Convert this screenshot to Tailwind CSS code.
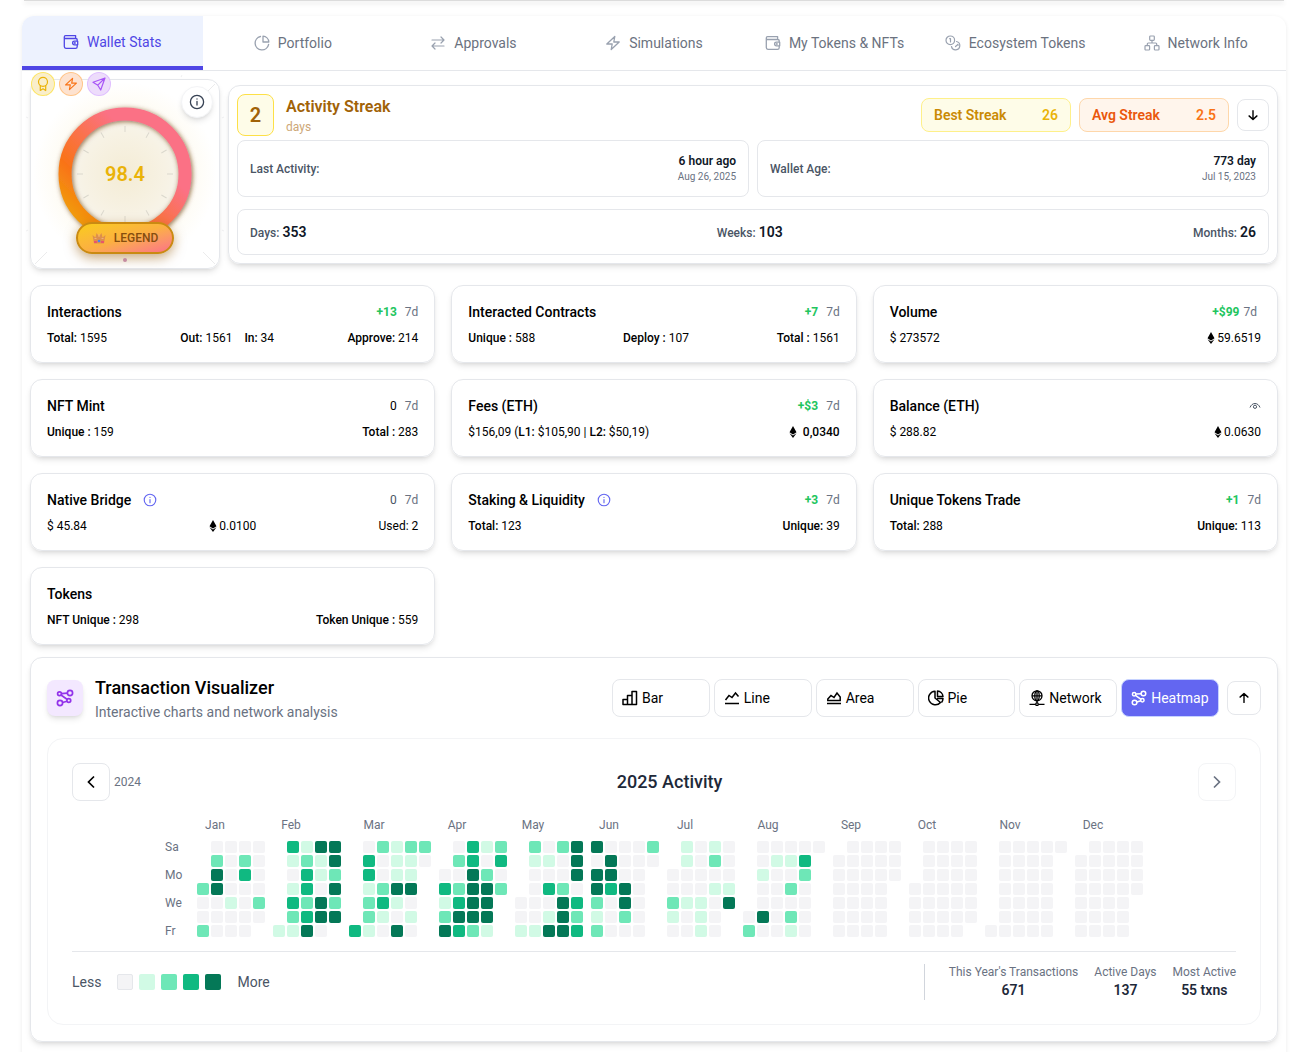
<!DOCTYPE html>
<html lang="en">
<head>
<meta charset="utf-8">
<meta name="viewport" content="width=device-width, initial-scale=1">
<title>Wallet Stats</title>
<script src="https://cdn.jsdelivr.net/npm/@tailwindcss/browser@4"></script>
</head>
<body class="overflow-x-hidden bg-white font-['Roboto',sans-serif] text-black">

<svg class="hidden" aria-hidden="true">
  <symbol id="wallet" viewBox="0 0 16 16" fill="none" stroke="currentColor" stroke-width="1.3" stroke-linejoin="round"><path d="M1.3 3v9.6c0 1 .6 1.7 1.6 1.7h9.600c1 0 1.700-.6 1.700-1.600v-1.900M14.200 7.200V5.800c0-.8-.6-1.300-1.400-1.300H2.500C1.800 4.500 1.300 4 1.300 3.100S1.800 1.600 2.600 1.600h10v2.900M14.700 7.200h-3.200c-1.100 0-1.900.8-1.900 1.800s.8 1.800 1.900 1.800h3.200z"/><circle cx="11.800" cy="9" r=".4"/></symbol>
  <symbol id="pie" viewBox="0 0 16 16" fill="none" stroke="currentColor" stroke-width="1.300" stroke-linejoin="round" stroke-linecap="round"><path d="M6.500 1.500A6.800 6.800 0 1 0 14.600 9.500"/><path d="M9 1.200A6.300 6.300 0 0 1 14.800 7H9z"/></symbol>
  <symbol id="swap" viewBox="0 0 16 16" fill="none" stroke="currentColor" stroke-width="1.200" stroke-linecap="round" stroke-linejoin="round"><path d="M2 5h12M11 2l3 3-3 3M14 11H2M5 8l-3 3 3 3"/></symbol>
  <symbol id="bolt" viewBox="0 0 16 16" fill="none" stroke="currentColor" stroke-width="1.300" stroke-linejoin="round"><path d="M9.800 1.500 1.800 9h5.400l-1 5.500L14.200 7H8.800z"/></symbol>
  <symbol id="coins" viewBox="0 0 16 16" fill="none" stroke="currentColor" stroke-width="1.200" stroke-linecap="round" stroke-linejoin="round"><circle cx="5.300" cy="5.300" r="4.300"/><path d="M4.700 3.700h.8v3.300M11.500 6.500a4.200 4.200 0 1 1-5 5M10.500 11.500l1.500-1.300M12.700 9.500l.5.500"/></symbol>
  <symbol id="sitemap" viewBox="0 0 16 16" fill="none" stroke="currentColor" stroke-width="1.200" stroke-linejoin="round"><rect x="5.700" y="1" width="4.600" height="4.400" rx=".8"/><rect x="1" y="10.600" width="4.600" height="4.400" rx=".8"/><rect x="10.400" y="10.600" width="4.600" height="4.400" rx=".8"/><path d="M8 5.400V8M3.300 10.600V9c0-.6.400-1 1-1h7.400c.6 0 1 .4 1 1v1.600"/></symbol>
  <symbol id="info" viewBox="0 0 16 16" fill="none" stroke="currentColor" stroke-width="1.300" stroke-linecap="round"><circle cx="8" cy="8" r="6.600"/><path d="M8 7.500v3.500M8 5v.1"/></symbol>
  <symbol id="eth" viewBox="0 0 8 12"><path fill="currentColor" d="M4 0 7.500 6.200 4 8.500.5 6.200zM.5 7.300 4 9.600l3.500-2.300L4 12z"/></symbol>
  <symbol id="graph" viewBox="0 0 18 18" fill="none" stroke="currentColor" stroke-width="1.700"><circle cx="3.500" cy="4.800" r="1.900"/><circle cx="14" cy="4" r="2.600"/><circle cx="4" cy="14" r="2.600"/><circle cx="12.800" cy="11.500" r="1.900"/><path d="m5.400 4.600 6-.4M5 6l6.300 4.500M6.600 13.500l4.400-1.300"/></symbol>
  <symbol id="arrow-down" viewBox="0 0 16 16" fill="none" stroke="currentColor" stroke-width="1.600" stroke-linecap="round" stroke-linejoin="round"><path d="M8 3v10M3.500 9 8 13.200 12.500 9"/></symbol>
</svg>

<header class="ml-6 mr-[21px] h-px bg-[#dcdcdc] shadow-[0_2px_5px_rgba(0,0,0,0.22)]"></header>

<main class="ml-[22px] mr-[19px] mt-[15px] rounded-xl pb-8 shadow-[0_1px_4px_rgba(0,0,0,0.08)]">
  <nav class="grid h-[55px] grid-cols-7 border-b border-gray-200 text-sm text-[#6b7280]">
    <a href="#" class="flex items-center justify-center gap-2 rounded-tl-xl border-b-4 border-[#4f46e5] bg-[#edf2fe] pt-0.5 text-[#4f46e5]"><svg class="size-4"><use href="#wallet"/></svg>Wallet Stats</a>
    <a href="#" class="flex items-center justify-center gap-2"><svg class="size-4 text-gray-400"><use href="#pie"/></svg>Portfolio</a>
    <a href="#" class="flex items-center justify-center gap-2"><svg class="size-4 text-gray-400"><use href="#swap"/></svg>Approvals</a>
    <a href="#" class="flex items-center justify-center gap-2"><svg class="size-4 text-gray-400"><use href="#bolt"/></svg>Simulations</a>
    <a href="#" class="flex items-center justify-center gap-2 whitespace-nowrap"><svg class="size-4 text-gray-400"><use href="#wallet"/></svg>My Tokens &amp; NFTs</a>
    <a href="#" class="flex items-center justify-center gap-2 whitespace-nowrap"><svg class="size-4 text-gray-400"><use href="#coins"/></svg>Ecosystem Tokens</a>
    <a href="#" class="flex items-center justify-center gap-2 whitespace-nowrap"><svg class="size-4 text-gray-400"><use href="#sitemap"/></svg>Network Info</a>
  </nav>

  <div class="px-2 pt-2">
    <div class="flex gap-2">
      <!-- score gauge -->
      <section class="relative size-[190px] shrink-0 rounded-xl border border-gray-200 shadow-md">
        <svg class="absolute -inset-[21px] size-[230px]" viewBox="-115 -115 230 230" fill="none">
          <defs>
            <radialGradient id="glow"><stop offset="0" stop-color="#eab308" stop-opacity=".12"/><stop offset=".65" stop-color="#eab308" stop-opacity=".06"/><stop offset="1" stop-color="#eab308" stop-opacity="0"/></radialGradient>
            <radialGradient id="dial"><stop offset="0" stop-color="#f4ecd5"/><stop offset=".75" stop-color="#f7f2e4"/><stop offset="1" stop-color="#f7f4ea"/></radialGradient>
            <linearGradient id="ring" x1="-50" y1="50" x2="50" y2="-50" gradientUnits="userSpaceOnUse"><stop offset="0" stop-color="#f0a00b"/><stop offset=".25" stop-color="#f97316"/><stop offset=".72" stop-color="#fb7185"/></linearGradient>
            <filter id="ring-shadow" x="-20%" y="-20%" width="140%" height="140%"><feDropShadow dx="1" dy="1" stdDeviation="2.5" flood-color="#6b3a10" flood-opacity=".75"/></filter>
          </defs>
          <circle r="92" fill="url(#glow)"/>
          <circle r="54" fill="url(#dial)"/>
          <g id="ticks" stroke="#dbd8cd"></g>
          <g id="rays" stroke="#efeff0"></g>
          <path stroke="#ebebec" d="M-78 78-90 90M78 78 90 90M78-78 90-90M-78-78-90-90"/>
          <circle r="60" stroke="url(#ring)" stroke-width="13" filter="url(#ring-shadow)"/>
        </svg>
        <div class="absolute -top-2 left-0 flex gap-1">
          <span class="flex size-6 items-center justify-center rounded-full border border-yellow-300/60 bg-[#f9eecb] text-[#eab308]"><svg class="size-4" viewBox="0 0 16 16" fill="none" stroke="currentColor" stroke-width="1.200" stroke-linejoin="round"><circle cx="8" cy="5.800" r="4.500"/><path d="M5.300 9.500V14.500L8 12.800l2.700 1.700V9.500"/></svg></span>
          <span class="flex size-6 items-center justify-center rounded-full border border-orange-300/70 bg-[#fde2d0] text-[#f97316]"><svg class="size-[14px]"><use href="#bolt"/></svg></span>
          <span class="flex size-6 items-center justify-center rounded-full border border-purple-300/70 bg-[#eddcfb] text-[#a855f7]"><svg class="size-4" viewBox="0 0 16 16" fill="none" stroke="currentColor" stroke-width="1.200" stroke-linejoin="round"><path d="M14 2 2 6.300l4.800 2.900L9.700 14zM6.800 9.200 14 2"/></svg></span>
        </div>
        <button type="button" aria-label="About the score" class="absolute right-1.5 top-1.5 flex size-8 items-center justify-center rounded-full border border-gray-100 bg-white text-gray-700 shadow-md"><svg class="size-4"><use href="#info"/></svg></button>
        <div class="absolute inset-0 flex items-center justify-center text-xl font-semibold text-[#eab308]">98.4</div>
        <div class="absolute inset-x-0 top-[142px] flex flex-col items-center gap-1">
          <div class="flex h-8 w-[98px] items-center justify-center gap-2 rounded-full border-2 border-[#ca8a12] bg-linear-to-br from-[#facc15] via-[#fbb040] to-[#fb7185] text-xs font-medium text-[#854d0e] shadow-[0_4px_12px_rgba(150,90,10,0.5)]">
            <svg class="size-[14px]" viewBox="0 0 14 14"><path fill="#dd8f4c" d="m.5 4 3 2.500L4.500 2 7 5.500 9.500 2l1 4.500 3-2.500L12 12.500H2z"/><path fill="#e8566b" d="M2 10h3v2H2zM9 10h3v2H9z"/><path fill="#efb07a" d="M6.500 3h1v3h-1zM2.500 7h2v1h-2zM9.500 7h2v1h-2z"/><circle cx="7" cy="10" r="1.300" fill="#4a7ff0"/></svg>LEGEND
          </div>
          <span class="size-1 rounded-full bg-[#c58ba0]"></span>
        </div>
      </section>

      <!-- activity streak -->
      <section class="mt-1.5 min-w-0 flex-1 self-start rounded-xl border border-gray-200 p-2 shadow-md">
        <div class="flex h-[42px] items-center justify-between">
          <div class="flex items-center gap-3">
            <div class="flex h-[42px] w-[37px] items-center justify-center rounded-lg border border-[#fde047] bg-yellow-50 text-xl font-semibold text-[#a16207]">2</div>
            <div>
              <h2 class="text-base/6 font-semibold text-[#a16207]">Activity Streak</h2>
              <p class="text-xs text-[#cda777]">days</p>
            </div>
          </div>
          <div class="flex items-center gap-2 text-sm font-semibold">
            <div class="flex h-[34px] w-[150px] items-center justify-between rounded-lg border border-[#fef08a] bg-yellow-50 px-3 text-[#ca8a04]">Best Streak<span class="text-[#eab308]">26</span></div>
            <div class="flex h-[34px] w-[150px] items-center justify-between rounded-lg border border-[#fed7aa] bg-[#fff5ec] px-3 text-[#ea580c]">Avg Streak<span class="text-[#f97316]">2.5</span></div>
            <button type="button" aria-label="Expand" class="flex size-8 items-center justify-center rounded-lg border border-gray-200"><svg class="size-[14px]"><use href="#arrow-down"/></svg></button>
          </div>
        </div>
        <div class="mt-1 grid grid-cols-2 gap-2 text-xs font-medium text-gray-600">
          <div class="flex h-[57px] items-center justify-between rounded-lg border border-gray-200 px-3">Last Activity:<div class="text-right"><p class="font-semibold text-gray-900">6 hour ago</p><p class="text-[10px]/[15px] font-normal text-gray-500">Aug 26, 2025</p></div></div>
          <div class="flex h-[57px] items-center justify-between rounded-lg border border-gray-200 px-3">Wallet Age:<div class="text-right"><p class="font-semibold text-gray-900">773 day</p><p class="text-[10px]/[15px] font-normal text-gray-500">Jul 15, 2023</p></div></div>
        </div>
        <div class="mt-3 flex h-[46px] items-center justify-between rounded-lg border border-gray-200 px-3 text-xs font-medium text-gray-600">
          <p>Days: <b class="text-sm font-semibold text-gray-900">353</b></p>
          <p>Weeks: <b class="text-sm font-semibold text-gray-900">103</b></p>
          <p>Months: <b class="text-sm font-semibold text-gray-900">26</b></p>
        </div>
      </section>
    </div>

    <!-- metric cards -->
    <div class="mt-4 grid grid-cols-3 gap-4 text-xs">
      <section class="rounded-xl border border-gray-200 p-4 shadow-md">
        <div class="flex h-5 items-center justify-between"><h3 class="text-sm font-medium">Interactions</h3><p class="flex gap-2 text-gray-500"><b class="font-bold text-[#22c55e]">+13</b>7d</p></div>
        <div class="mt-2 flex justify-between"><p><b class="font-medium">Total:</b> 1595</p><p class="flex gap-3"><span><b class="font-medium">Out:</b> 1561</span><span><b class="font-medium">In:</b> 34</span></p><p><b class="font-medium">Approve:</b> 214</p></div>
      </section>
      <section class="rounded-xl border border-gray-200 p-4 shadow-md">
        <div class="flex h-5 items-center justify-between"><h3 class="text-sm font-medium">Interacted Contracts</h3><p class="flex gap-2 text-gray-500"><b class="font-bold text-[#22c55e]">+7</b>7d</p></div>
        <div class="mt-2 flex justify-between"><p><b class="font-medium">Unique :</b> 588</p><p><b class="font-medium">Deploy :</b> 107</p><p><b class="font-medium">Total :</b> 1561</p></div>
      </section>
      <section class="rounded-xl border border-gray-200 p-4 shadow-md">
        <div class="flex h-5 items-center justify-between"><h3 class="text-sm font-medium">Volume</h3><p class="mr-1 flex gap-1 text-gray-500"><b class="font-bold text-[#22c55e]">+$99</b>7d</p></div>
        <div class="mt-2 flex justify-between"><p>$ 273572</p><p class="flex items-center gap-0.5"><svg class="h-3 w-2"><use href="#eth"/></svg>59.6519</p></div>
      </section>
      <section class="rounded-xl border border-gray-200 p-4 shadow-md">
        <div class="flex h-5 items-center justify-between"><h3 class="text-sm font-medium">NFT Mint</h3><p class="flex gap-2 text-gray-500"><span class="text-black">0</span>7d</p></div>
        <div class="mt-2 flex justify-between"><p><b class="font-medium">Unique :</b> 159</p><p><b class="font-medium">Total :</b> 283</p></div>
      </section>
      <section class="rounded-xl border border-gray-200 p-4 shadow-md">
        <div class="flex h-5 items-center justify-between"><h3 class="text-sm font-medium">Fees (ETH)</h3><p class="flex gap-2 text-gray-500"><b class="font-bold text-[#22c55e]">+$3</b>7d</p></div>
        <div class="mt-2 flex justify-between"><p>$156,09 (<b class="font-medium">L1:</b> $105,90 | <b class="font-medium">L2:</b> $50,19)</p><p class="flex items-center gap-1.5 font-medium"><svg class="h-3 w-2"><use href="#eth"/></svg>0,0340</p></div>
      </section>
      <section class="rounded-xl border border-gray-200 p-4 shadow-md">
        <div class="flex h-5 items-center justify-between"><h3 class="text-sm font-medium">Balance (ETH)</h3><button type="button" aria-label="Hide balance" class="text-gray-600"><svg class="h-2 w-3" viewBox="0 0 12 8" fill="none" stroke="currentColor"><path d="M1 5.500C2 3 3.800 1.500 6 1.500S10 3 11 5.500"/><circle cx="6" cy="4.800" r="1.600"/></svg></button></div>
        <div class="mt-2 flex justify-between"><p>$ 288.82</p><p class="flex items-center gap-0.5"><svg class="h-3 w-2"><use href="#eth"/></svg>0.0630</p></div>
      </section>
      <section class="rounded-xl border border-gray-200 p-4 shadow-md">
        <div class="flex h-5 items-center justify-between"><h3 class="flex items-center gap-3 text-sm font-medium">Native Bridge<svg class="size-[14px] text-[#6366f1]"><use href="#info"/></svg></h3><p class="flex gap-2 text-gray-500"><span class="text-gray-600">0</span>7d</p></div>
        <div class="mt-2 flex justify-between"><p>$ 45.84</p><p class="flex items-center gap-0.5"><svg class="h-3 w-2"><use href="#eth"/></svg>0.0100</p><p>Used: 2</p></div>
      </section>
      <section class="rounded-xl border border-gray-200 p-4 shadow-md">
        <div class="flex h-5 items-center justify-between"><h3 class="flex items-center gap-3 text-sm font-medium">Staking &amp; Liquidity<svg class="size-[14px] text-[#6366f1]"><use href="#info"/></svg></h3><p class="flex gap-2 text-gray-500"><b class="font-bold text-[#22c55e]">+3</b>7d</p></div>
        <div class="mt-2 flex justify-between"><p><b class="font-medium">Total:</b> 123</p><p><b class="font-medium">Unique:</b> 39</p></div>
      </section>
      <section class="rounded-xl border border-gray-200 p-4 shadow-md">
        <div class="flex h-5 items-center justify-between"><h3 class="text-sm font-medium">Unique Tokens Trade</h3><p class="flex gap-2 text-gray-500"><b class="font-bold text-[#22c55e]">+1</b>7d</p></div>
        <div class="mt-2 flex justify-between"><p><b class="font-medium">Total:</b> 288</p><p><b class="font-medium">Unique:</b> 113</p></div>
      </section>
      <section class="rounded-xl border border-gray-200 p-4 shadow-md">
        <h3 class="text-sm font-medium">Tokens</h3>
        <div class="mt-2 flex justify-between"><p><b class="font-medium">NFT Unique :</b> 298</p><p><b class="font-medium">Token Unique :</b> 559</p></div>
      </section>
    </div>

    <!-- transaction visualizer -->
    <section class="mt-3 rounded-xl border border-gray-200 p-4 shadow-md">
      <div class="flex items-center justify-between">
        <div class="flex items-center gap-3">
          <span class="flex size-9 items-center justify-center rounded-lg bg-purple-100 text-[#9333ea] shadow-md"><svg class="size-[18px]"><use href="#graph"/></svg></span>
          <div>
            <h2 class="text-lg/7 font-medium">Transaction Visualizer</h2>
            <p class="text-sm text-gray-500">Interactive charts and network analysis</p>
          </div>
        </div>
        <div class="flex items-center gap-2">
          <div class="grid w-[607px] grid-cols-6 gap-1 text-sm">
            <button type="button" class="flex h-[38px] items-center gap-1 rounded-lg border border-gray-200 px-[9px]"><svg class="size-4" viewBox="0 0 16 16" fill="none" stroke="currentColor" stroke-width="1.500" stroke-linejoin="round"><path d="M1 9.500h4.500v5H1zM5.500 5.500H10v9H5.500zM10 1.500h4.500v13H10z"/></svg>Bar</button>
            <button type="button" class="flex h-[38px] items-center gap-1 rounded-lg border border-gray-200 px-[9px]"><svg class="size-4" viewBox="0 0 16 16" fill="none" stroke="currentColor" stroke-width="1.500"><path d="M1 13.500h14M1.500 10 5 5.500l3 2L11.500 3 14.500 6.500"/></svg>Line</button>
            <button type="button" class="flex h-[38px] items-center gap-1 rounded-lg border border-gray-200 px-[9px]"><svg class="size-4" viewBox="0 0 16 16" fill="none" stroke="currentColor" stroke-width="1.500"><path d="M1 13.500h14M1.800 10.500V9L5 5.500l3 2L11 3l3.200 4v3.500z"/></svg>Area</button>
            <button type="button" class="flex h-[38px] items-center gap-1 rounded-lg border border-gray-200 px-[9px]"><svg class="size-4" viewBox="0 0 16 16" fill="none" stroke="currentColor" stroke-width="1.500" stroke-linejoin="round"><path d="M7 1.200A6.800 6.800 0 1 0 12.500 12.500L7 8zM9.500 1A6 6 0 0 1 15 6.500H9.500zM9 8.500h6a6.500 6.500 0 0 1-1.500 4"/></svg>Pie</button>
            <button type="button" class="flex h-[38px] items-center gap-1 rounded-lg border border-gray-200 px-[9px]"><svg class="size-4" viewBox="0 0 16 16" fill="none" stroke="currentColor" stroke-width="1.300"><circle cx="8" cy="5.800" r="5"/><ellipse cx="8" cy="5.800" rx="2.200" ry="5"/><path d="M3 5.800h10M8 .8V13M.5 14.300h6M9.500 14.300h6"/><circle cx="8" cy="14.200" r="1.300"/></svg>Network</button>
            <button type="button" class="flex h-[38px] items-center gap-1 rounded-lg border border-indigo-200 bg-[#6366f1] px-[9px] text-white"><svg class="size-4"><use href="#graph"/></svg>Heatmap</button>
          </div>
          <button type="button" aria-label="Collapse" class="flex size-[34px] items-center justify-center rounded-lg border border-gray-200"><svg class="size-[14px] rotate-180"><use href="#arrow-down"/></svg></button>
        </div>
      </div>

      <div class="mt-4 rounded-2xl border border-gray-100 p-6">
        <div class="flex items-center justify-between">
          <div class="flex items-center gap-1"><button type="button" aria-label="Previous year" class="flex size-[38px] items-center justify-center rounded-lg border border-gray-200"><svg class="size-4" viewBox="0 0 16 16" fill="none" stroke="currentColor" stroke-width="1.700"><path d="M11 2.500 5.500 8l5.500 5.500"/></svg></button><span class="text-xs text-gray-500">2024</span></div>
          <h3 class="text-lg/7 font-medium text-gray-800">2025 Activity</h3>
          <button type="button" aria-label="Next year" disabled class="flex size-[38px] items-center justify-center rounded-lg border border-gray-100 text-gray-500"><svg class="size-4" viewBox="0 0 16 16" fill="none" stroke="currentColor" stroke-width="1.700"><path d="M5 2.500 10.500 8 5 13.500"/></svg></button>
        </div>

        <div class="mt-4 flex justify-center text-xs text-gray-500">
          <div class="mt-6 flex w-8 shrink-0 flex-col gap-4"><span class="leading-3">Sa</span><span class="leading-3">Mo</span><span class="leading-3">We</span><span class="leading-3">Fr</span></div>
          <div id="months" class="flex gap-2"></div>
        </div>

        <div class="mt-[14px] flex items-center justify-between border-t border-gray-200 pt-3">
          <div class="flex items-center gap-4 text-sm text-gray-600">Less
            <div class="flex gap-1.5"><i class="size-4 rounded-xs border border-gray-200 bg-[#f4f4f6]"></i><i class="size-4 rounded-xs bg-[#d1fae5]"></i><i class="size-4 rounded-xs bg-[#6ee7b7]"></i><i class="size-4 rounded-xs bg-[#10b981]"></i><i class="size-4 rounded-xs bg-[#047857]"></i></div>
            More</div>
          <dl class="flex gap-4 border-l border-gray-300 pl-6 text-center text-xs text-gray-500">
            <div><dt>This Year's Transactions</dt><dd class="text-sm font-semibold text-gray-800">671</dd></div>
            <div><dt>Active Days</dt><dd class="text-sm font-semibold text-gray-800">137</dd></div>
            <div><dt>Most Active</dt><dd class="text-sm font-semibold text-gray-800">55 txns</dd></div>
          </dl>
        </div>
      </div>
    </section>
  </div>
</main>

<script>
// One string per weekday row; a digit is the activity level, a dot is a day outside the month.
const year = [
  ['Jan', '.0000 .2020 .4030 24000 00102 00000 2000.'],
  ['Feb', '.3144 .1214 .0312 .1304 .3242 .2344 1140.'],
  ['Mar', '.02122 .30110 .3011. .1244. .2310. .2101. 31040.'],
  ['Apr', '.0312 .2303 00420 32442 1344. 2444. 4321.'],
  ['May', '.2024 .1104 .0004 .0320 00043 00142 11443'],
  ['Jun', '40002 04000 4400. 4340. 2040. 1020. 2000.'],
  ['Jul', '.1010 .1020 00000 00011 21104 1010. 0010.'],
  ['Aug', '.00000 .0113. .1002. .0020. .0000. 04020. 20010.'],
  ['Sep', '.0000 00000 00000 0000. 0000. 0000. 0000.'],
  ['Oct', '.0000 .0000 .0000 00000 00000 00000 0000.'],
  ['Nov', '.00000 .0000. .0000. .0000. .0000. .0000. 00000.'],
  ['Dec', '.0000 00000 00000 00000 0000. 0000. 0000.']
];
const shades = { '.': '', 0: 'bg-[#f4f4f6]', 1: 'bg-[#d1fae5]', 2: 'bg-[#6ee7b7]', 3: 'bg-[#10b981]', 4: 'bg-[#047857]' };
document.getElementById('months').innerHTML = year.map(([name, data]) => {
  const rows = data.split(' ').map(row =>
    '<div class="flex gap-0.5">' + [...row].map(d => `<i class="size-3 rounded-xs ${shades[d]}"></i>`).join('') + '</div>').join('');
  return `<div><p class="mb-2 pr-8 text-center">${name}</p><div class="flex flex-col gap-0.5">${rows}</div></div>`;
}).join('');

let ticks = '', rays = '';
for (let a = 0; a < 360; a += 30) {
  ticks += `<path d="M0-42V-48" transform="rotate(${a})"/>`;
  if (a % 90) rays += `<path d="M0-112V-114" transform="rotate(${a})"/>`;
}
document.getElementById('ticks').innerHTML = ticks;
document.getElementById('rays').innerHTML = rays;
</script>
</body>
</html>
